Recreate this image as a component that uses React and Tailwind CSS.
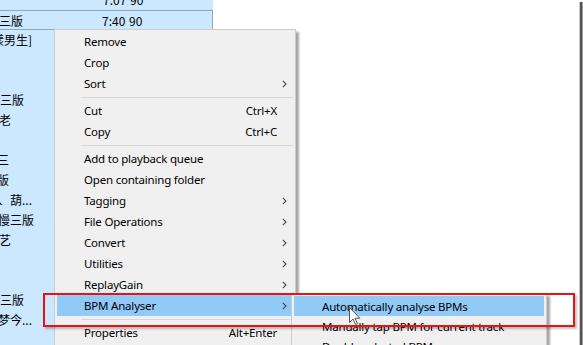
const listRows = [
  { text: '漾男生]', shift: '-ml-[8px]' },
  { text: '' },
  { text: '' },
  { text: '三版' },
  { text: '老', shift: '-ml-px' },
  { text: '' },
  { text: '三', shift: '-ml-[3px]' },
  { text: '版', shift: '-ml-[3px]' },
  { text: '、葫...', shift: '-ml-[2px]' },
  { text: '慢三版', shift: '-ml-[2px]' },
  { text: '艺', shift: '-ml-px' },
  { text: '' },
  { text: '' },
  { text: '三版' },
  { text: '梦今...', shift: '-ml-[2px]' },
  { text: '' },
]

const menuItems = [
  { label: 'Remove' },
  { label: 'Crop' },
  { label: 'Sort', sub: true },
  'sep',
  { label: 'Cut', keys: 'Ctrl+X' },
  { label: 'Copy', keys: 'Ctrl+C' },
  'sep',
  { label: 'Add to playback queue' },
  { label: 'Open containing folder' },
  { label: 'Tagging', sub: true },
  { label: 'File Operations', sub: true },
  { label: 'Convert', sub: true },
  { label: 'Utilities', sub: true },
  { label: 'ReplayGain', sub: true },
  { label: 'BPM Analyser', sub: true, active: true },
  'sep',
  { label: 'Properties', keys: 'Alt+Enter' },
]

const bpmItems = [
  { label: 'Automatically analyse BPMs', active: true },
  { label: 'Manually tap BPM for current track' },
  { label: 'Double selected BPM' },
]

function Arrow() {
  return (
    <svg width="5" height="8" viewBox="0 0 5 8" className="ml-[5px]">
      <path d="M0.8 0.8 L4 4 L0.8 7.2" fill="none" stroke="#4a4a4a" strokeWidth="1.1" />
    </svg>
  )
}

function MenuRow({ item }) {
  if (item === 'sep') {
    return (
      <div className="h-[6px] flex items-center ml-[26px] mr-[2px]">
        <div className="h-px w-full bg-[#d7d7d7]" />
      </div>
    )
  }
  return (
    <div className={`h-[21px] mx-[2px] flex items-center pl-[27px] pt-px ${item.active ? 'bg-[#91c9f7]' : ''}`}>
      <span className="flex-1 whitespace-nowrap">{item.label}</span>
      {item.keys && <span className="whitespace-nowrap">{item.keys}</span>}
      <span className="w-[16px] flex items-center">{item.sub && <Arrow />}</span>
    </div>
  )
}

export default function App() {
  return (
    <div className="w-[583px] h-[345px] overflow-hidden bg-white flex text-[11.5px] tracking-[-0.2px] text-black font-['Noto_Sans','Noto_Sans_CJK_SC',sans-serif] leading-none">
      <div className="relative flex-1 overflow-hidden">
        {/* playlist behind the menu */}
        <div className="w-[213px] h-[360px] bg-[#cce8ff] -mt-[10px] flex flex-col text-[12px] tracking-normal font-['Noto_Sans_CJK_SC','Noto_Sans',sans-serif]">
          <div className="h-[20px] shrink-0 flex items-center">
            <span className="ml-[103px] w-[27px]">7:07</span>
            <span>90</span>
          </div>
          <div className="h-[20px] shrink-0 flex items-center pt-px border-y border-r border-[#8fa8c0]">
            <span className="w-[103px] -ml-px">三版</span>
            <span className="w-[27px]">7:40</span>
            <span>90</span>
          </div>
          {listRows.map((r, i) => (
            <div key={i} className="h-[20px] shrink-0 flex items-center overflow-hidden">
              <span className={`whitespace-nowrap ${r.shift || ''}`}>{r.text}</span>
            </div>
          ))}
        </div>

        {/* context menu */}
        <div className="absolute left-[54px] top-[29px] w-[242px] h-[330px] bg-[#f0f0f0] border border-[#cccccc] pt-px shadow-[3px_3px_2px_rgba(0,0,0,0.35)]">
          {menuItems.map((item, i) => (
            <MenuRow key={i} item={item} />
          ))}
        </div>

        {/* BPM Analyser submenu */}
        <div className="absolute left-[291px] top-[293px] w-[256px] h-[80px] bg-[#f0f0f0] border border-[#cccccc] pt-[2px] shadow-[3px_3px_2px_rgba(0,0,0,0.35)]">
          {bpmItems.map((item) => (
            <div
              key={item.label}
              className={`h-[20px] mx-[2px] flex items-center pl-[28px] pt-px whitespace-nowrap ${item.active ? 'bg-[#91c9f7]' : ''}`}
            >
              {item.label}
            </div>
          ))}
        </div>

        {/* annotation box */}
        <div className="absolute left-[43px] top-[293px] w-[532px] h-[34px] border-2 border-[#ee1111] shadow-[2px_2px_2px_rgba(0,0,0,0.25)]" />

        {/* mouse pointer */}
        <svg className="absolute left-[349px] top-[307px]" width="12" height="19" viewBox="0 0 12 19">
          <path d="M0.5 0.5 L0.5 15.5 L4 12 L6.5 17.5 L8.5 16.6 L6 11.2 L10.8 11.2 Z" fill="#fff" stroke="#555" strokeWidth="1" />
        </svg>
      </div>

      {/* screenshot edge shadow */}
      <div className="w-[4px] h-full pt-[2px] flex">
        <div className="w-px bg-[#c8c8c8]" />
        <div className="w-[2px] bg-[#555555]" />
        <div className="w-px bg-[#9a9a9a]" />
      </div>
    </div>
  )
}
